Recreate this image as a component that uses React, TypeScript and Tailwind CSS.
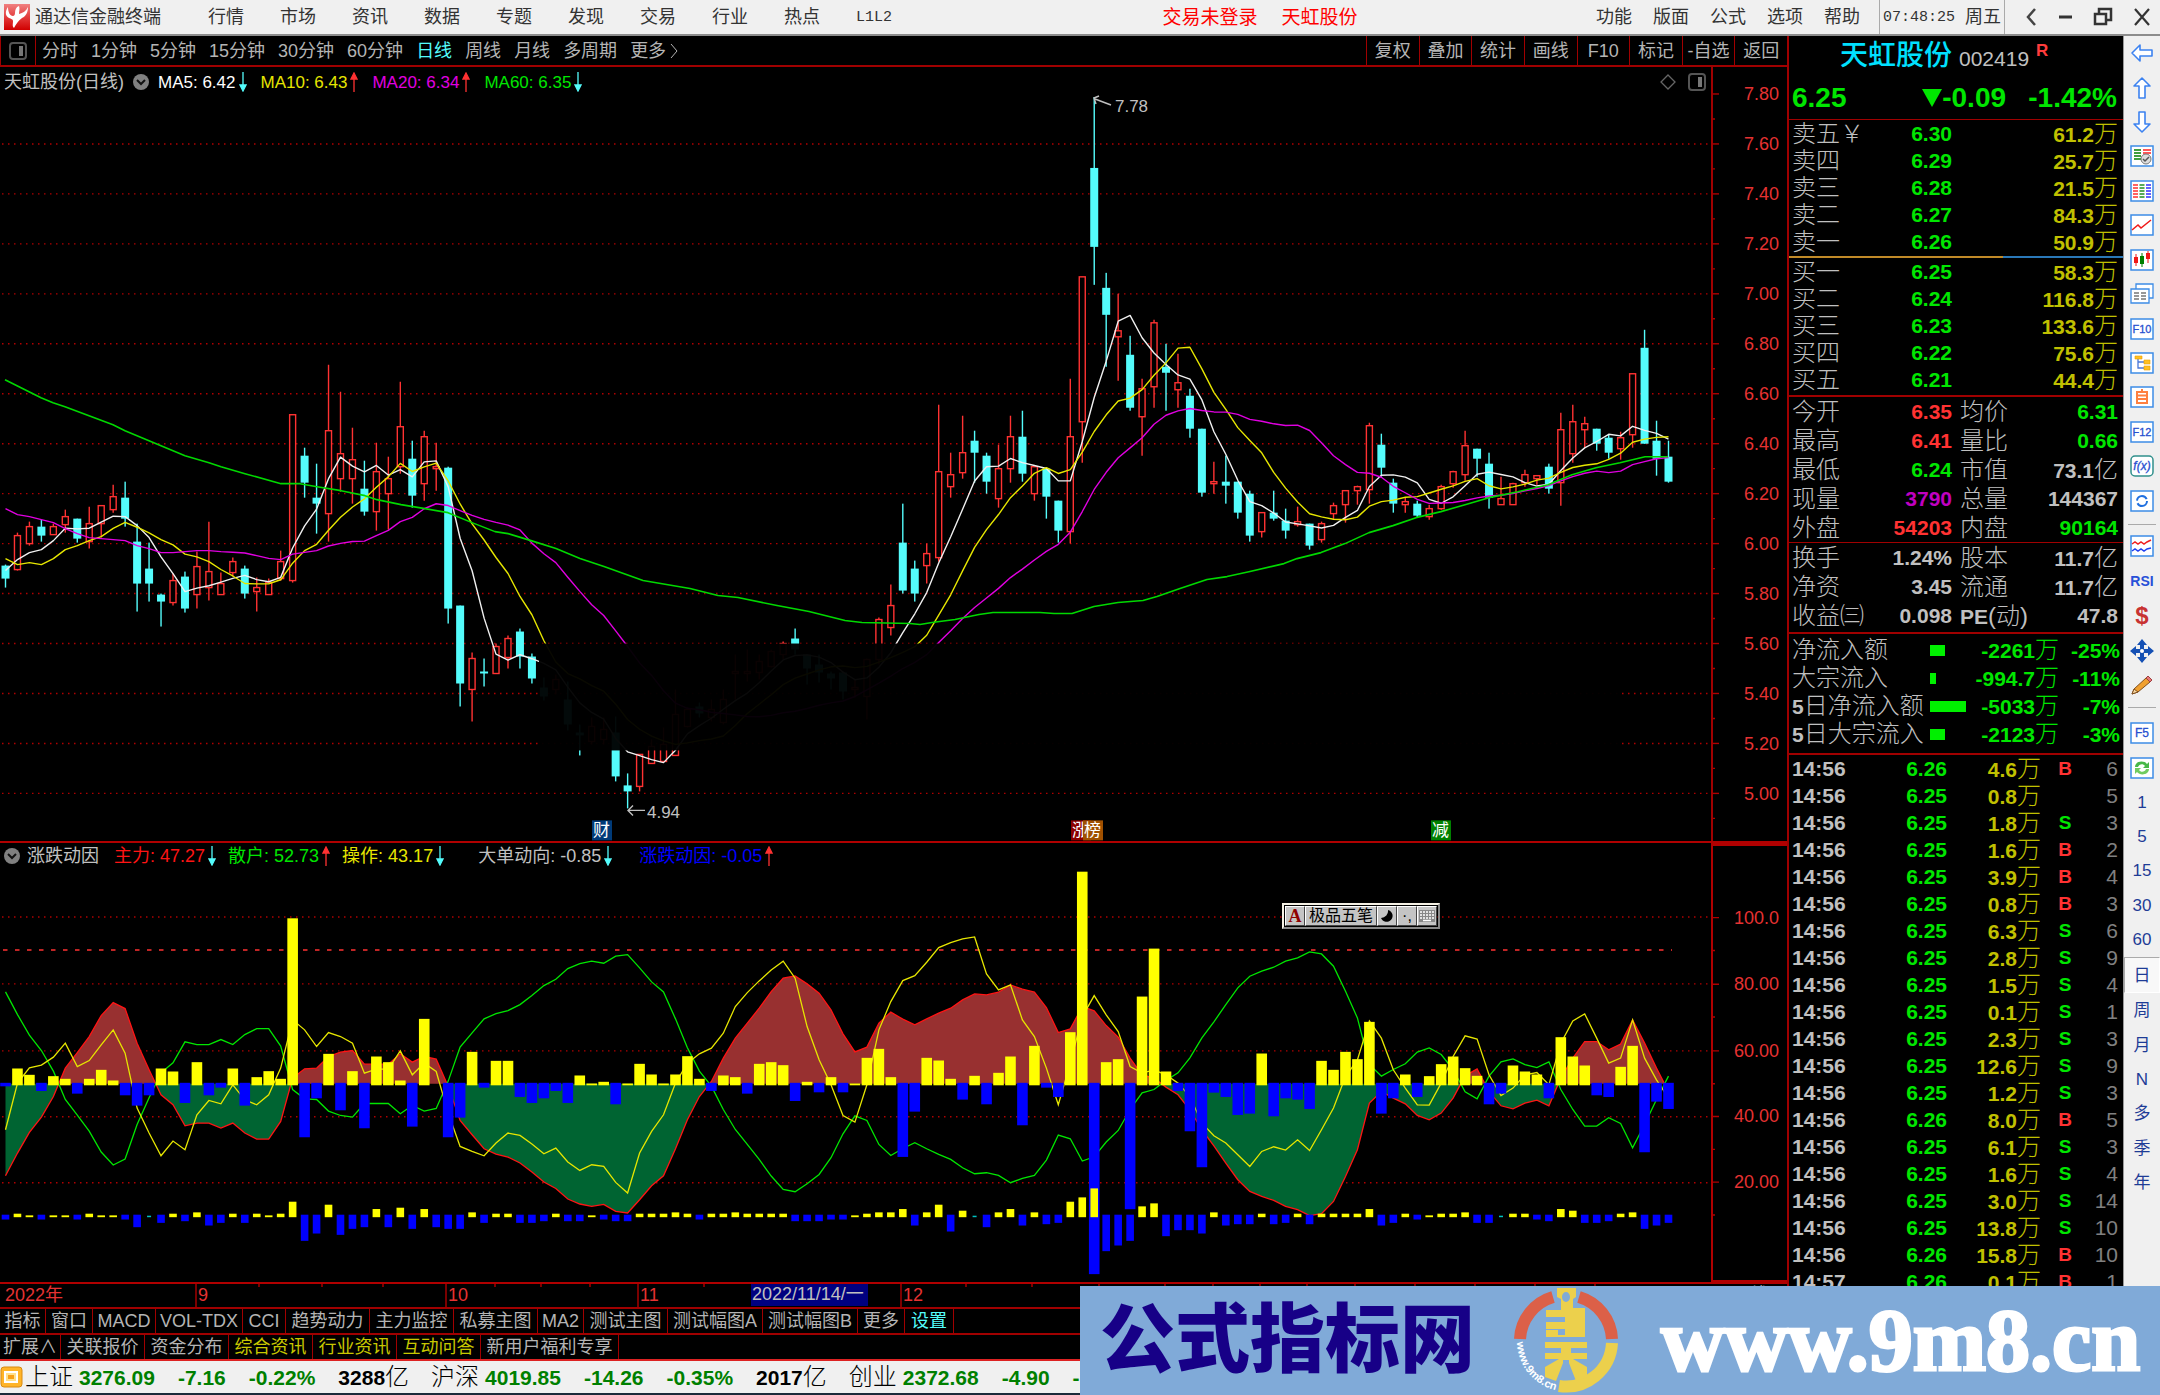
import React from "react";

// ---------- data ----------
const STEP = 11.964;
const X0 = 5.5;
const px = (i: number) => X0 + i * STEP;

// u/d (rise or fall), high, body top, body bottom, low
const candleData = `d565,566,579,588 u533,536,570,571 u522,527,544,546 d520,527,536,542 u524,527,535,535
u510,517,525,533 d519,519,539,543 u507,524,542,549 u506,506,524,538 u485,497,510,513
d482,498,519,527 d524,542,584,612 d543,569,584,602 d594,595,602,627 u574,581,603,606
d572,577,609,613 u552,567,595,609 u522,572,588,601 u573,584,595,595 u558,562,573,577
d566,569,594,599 u578,588,592,612 u579,583,595,595 u551,562,579,581 u415,415,581,583
d448,456,483,498 d464,498,504,534 u365,431,514,542 u392,454,479,492 u428,460,479,504
d461,489,512,516 u443,472,512,531 u457,479,494,530 u382,427,467,474 d441,459,496,508
u431,437,484,501 u443,467,469,491 d467,468,609,624 d606,606,684,707 u653,659,690,722
d659,672,674,687 u644,647,674,674 u636,639,658,669 d629,632,657,669 d654,657,679,684
d678,688,697,701 u675,680,690,695 d682,700,725,731 d725,733,736,756 u718,727,742,745
u718,730,740,745 d717,733,777,782 d774,786,792,809 u755,755,787,792 u740,747,764,764
u728,745,762,762 u690,715,756,756 u708,710,727,728 d703,707,714,718 u700,710,718,722
u690,700,723,725 u655,672,674,700 u650,672,674,682 u655,662,673,680 u650,652,667,668
u642,644,655,660 d629,639,650,655 d655,655,669,685 d655,665,673,683 d672,674,679,690
d672,673,692,700 u680,688,690,698 u659,660,697,720 u618,620,660,665 u585,606,628,636
d504,543,591,594 d561,569,594,602 u544,554,566,584 u405,472,558,562 u453,475,487,498
u416,453,473,479 d431,441,453,483 d453,456,482,494 u445,469,499,508 u416,437,469,483
d411,437,474,482 u467,467,494,501 d468,469,497,519 d501,501,531,543 u379,437,532,544
u277,277,422,463 d97,168,247,285 d273,288,315,367 u294,331,337,381 d336,355,408,411
u379,389,417,456 u320,323,387,408 d344,367,373,411 u354,383,390,408 d389,396,429,438
d429,429,493,497 u462,482,484,494 d456,482,486,504 d482,482,513,519 d491,494,536,542
u513,513,532,538 d491,513,519,521 d509,521,531,539 u507,522,525,527 d524,524,546,550
u522,524,540,543 u503,506,514,520 u491,491,505,523 u486,487,491,505 u423,426,490,504
d434,445,468,477 d479,483,504,513 u498,502,505,513 d501,504,516,518 u505,509,517,520
u485,487,509,510 u471,472,484,488 u431,446,475,481 d449,449,459,477 d453,464,498,509
u477,499,505,505 u483,484,505,505 u470,475,483,487 u476,476,479,485 d464,467,489,494
u413,430,483,506 u405,422,454,463 u417,424,430,448 d429,429,444,451 d435,438,453,459
u432,438,449,460 u374,374,435,448 d330,348,444,444 d421,441,459,476 d441,457,482,483`;

const candles = candleData.split(/\s+/).map((s) => {
  const [high, top, bottom, low] = s.slice(1).split(",").map(Number);
  return { up: s[0] === "u", high, top, bottom, low };
});
const closes = candles.map((c) => (c.up ? c.top : c.bottom));

// lead holds the averages of the first days, whose history is not loaded
const average = (n: number, lead: number[]) =>
  closes.map((_, i) => {
    if (i < lead.length) return lead[i];
    return closes.slice(i - n + 1, i + 1).reduce((a, b) => a + b, 0) / n;
  });
const toPoints = (ys: number[]) =>
  ys.map((y, i) => `${px(i).toFixed(1)},${y.toFixed(1)}`).join(" ");

const ma5 = average(5, [571, 560, 553, 550]);
const ma10 = average(10, [559, 565, 563, 565, 559, 550, 546, 541, 537]);
const ma20 = average(20, [
  509, 515, 517, 520, 523, 529, 534, 538, 539, 540, 541, 546, 549, 553, 553,
  552, 551, 551, 552,
]);
const ma60 =
  "5,380 17,386 29,392 41,398 53,403 65,407 89,416 113,425 125,431 149,441 173,451 185,456 209,463 221,467 245,474 281,484 300,484 317,487 341,491 365,496 377,500 401,505 425,509 448,513 472,523 495,532 508,534 531,541 556,549 580,559 592,563 604,567 643,581 690,589 718,596 738,598 777,606 809,612 845,621 862,623 910,624 920,625 932,623 955,620 979,615 993,613 1040,613 1054,614 1072,614 1094,607 1118,603 1143,601 1157,597 1180,589 1207,580 1227,577 1250,572 1284,564 1297,559 1321,553 1345,544 1369,533 1393,526 1416,518 1441,512 1465,505 1489,498 1518,492 1548,485 1572,475 1596,468 1620,463 1645,457 1668,457";

const MID = 1084;
const UNIT = 3.333;
const iy = (v: number) => MID - (v - 50) * UNIT;

const mainForce = [
  22.4, 29.2, 35.4, 40, 46.2, 54.7, 59.4, 64.2, 70.5, 74.4, 72.6, 62.2, 54.2,
  46.7, 43.7, 37.4, 38.2, 38.2, 36.7, 38.2, 35.2, 33.4, 33.4, 38.7, 51.7, 54.5,
  54.7, 58.2, 59.5, 60, 55.9, 55.9, 55.9, 59, 56.5, 58.2, 57.4, 49.2, 39, 34.7,
  30.5, 28.9, 28, 26.2, 23.5, 20.5, 18.6, 15.4, 13.9, 13.2, 13.8, 11.7, 11.2,
  15.2, 19.4, 22.4, 30.5, 39.2, 46.2, 50.7, 57.7, 63.7, 68.2, 72.7, 77.7, 81.7,
  82.4, 80, 77.2, 72.2, 65, 59.6, 61, 68.2, 71.5, 69.4, 67.7, 69.5, 71.2, 72.7,
  75.2, 77, 76.7, 77.5, 79.7, 78.4, 77.5, 72.9, 65.4, 66.5, 73.2, 71.9, 67.5,
  64, 57.7, 52.7, 51.7, 49, 46.7, 42.2, 36.2, 31.4, 26.2, 21.2, 17.7, 16.2, 15,
  13.2, 12.2, 10.4, 11, 14.7, 22.2, 30.2, 44.2, 47.7, 45.7, 44, 40.5, 39.2,
  41.2, 45.7, 52.4, 54.5, 47.7, 43.4, 42.5, 44.2, 45.1, 43.4, 51.7, 57.7, 62.7,
  62.7, 60.2, 61.9, 69.2, 62.2, 54.7, 47.7,
];
const operate = [
  36.2, 50.2, 54.8, 55.6, 58, 62.2, 55.2, 57, 61.7, 66.2, 59.2, 42.7, 35.2,
  28.4, 32.8, 30.2, 40.7, 45, 44, 49.7, 45.2, 43.7, 46.7, 54.7, 69.2, 66.2,
  61.2, 65.4, 64.2, 62.2, 53.2, 54.4, 54.4, 59.9, 52.7, 56.2, 53.7, 41.2, 31.2,
  29.7, 28.4, 32.2, 35.2, 34.5, 31.9, 29, 30.7, 26.5, 24, 25.7, 25.2, 20.4,
  17.2, 29.2, 35.7, 40.7, 50.2, 56.2, 59, 60.7, 65.2, 73.2, 77.4, 80.9, 84.2,
  86.8, 81.7, 67.2, 57.2, 49.7, 40.5, 38.5, 49.7, 66.2, 74.7, 81, 82.5, 86.5,
  90.9, 92.4, 93.5, 94.1, 83, 78.2, 79.7, 69.2, 64.2, 54.7, 43.7, 56.2, 70.2,
  76.5, 70.7, 65.7, 55.2, 53.2, 54.2, 52.7, 50.2, 46.2, 38.2, 34.4, 32.2, 28.7,
  25.2, 29.7, 31.1, 30.1, 33.2, 30, 36.2, 42.7, 52.2, 57.2, 68.9, 63.7, 54.2,
  48.7, 43.7, 43.6, 50.2, 58.2, 64.4, 63.4, 52.7, 46.5, 48.7, 52.7, 53.4, 49.7,
  62.2, 68.9, 71, 63.7, 56.2, 57.7, 69.2, 57.7, 51.2, 45.7,
];
const bigBars = [
  -0.6, 4.6, 2.7, -2, 2.3, 1.5, -2.8, 1.5, 4.2, 1, -3.3, -6.4, -3.3, 4.6, 3.7,
  -5.6, 6.5, -3.3, -1, 4.6, -6.4, 2, 3.8, 1.5, 49.7, -15.9, -4.2, 9, -7.8, 3.8,
  -13.2, 8.2, 6.5, 1, -12.7, 19.5, 0, -15.9, -10, 9.6, -1, 6.9, 6.9, -3.8,
  -5.6, -4.2, -2, -5.6, 2.5, 0.1, 0.6, -6, 0.1, 6, 2.8, 0.1, 2.8, 8.3, 1.5, -2,
  2.5, 2, -2.8, 6, 6.5, 5.6, -5, 0.6, -2.4, 2, -2.4, 0.1, 7.8, 10.5, 2, -21.8,
  -8.2, 7.8, 7, 1.5, -4.6, 2.4, -6, 3.3, 8.2, -12.3, 11.4, -1, -3.8, 15.5,
  63.7, -57, 6.5, 7.4, -37.5, 26.2, 40.6, 3.7, -2, -14.1, -24.9, -2.5, -3.8,
  -9.2, -8.8, 9.1, -9.6, -4.2, -4.6, -7.4, 6.9, 4.2, 9.6, 7.4, 18.6, -8.8,
  -4.2, 2.8, -3.8, 2.3, 5.9, 8.2, 4.7, 2.4, -6, -2.8, 5.5, 3.7, 2.8, -4.2, 14,
  8.2, 5.5, -3.3, -3.8, 5.1, 11.4, -20.4, -5.2, -7.4,
];
const smallBars = [
  -1, 0.6, 0.1, -1, 0.1, 0.1, -1, 0.6, 0.1, 0.1, -1, -3.3, 0, -2, 0.6, -1.5, 1,
  -2.8, -2, 0.6, -2, 0.6, 0.1, 0.6, 4.2, -7.4, -5.2, 3.3, -5.6, -3.8, -3.3, 2,
  -3.3, 2.4, -3.8, 2, -3.3, -3.8, -3.8, 1, -2, 0.6, 0.6, -2, -2, -1.5, 0.6,
  -1.5, -1.5, 0.1, -1, -1.5, -1.5, 0.6, 0.6, 0.6, 1, 0.6, -1, 0.6, 0.6, 1, 0.6,
  0.6, 0.6, 0.6, -1.5, -1.5, -1.5, -1, -1, 0.1, 0.6, 1, 1, 2, -2.8, 1, 3.3,
  -4.6, 1.5, 0, -3.3, 1, 2, -2.8, 1, -2.4, -2, 4.2, 5.5, 8.2, -10.5, -8.8,
  -7.4, 2.8, 3.7, -6, -4.2, -4.2, -5.2, 1, -2.8, -2.4, -2.4, 0.6, -2.4, -2, 0.6,
  -2.4, 0.6, 0.6, 0.6, 0.6, 2, -2.8, -2, 0.6, -1, 0.1, 0.6, 0.6, 1, -2, -2, 0,
  0.6, 0.6, -1, -1.5, 2, 1.5, -2, -2, -1.5, 0.6, 1, -3.8, -2.8, -2,
];

const sells = [
  ["卖五", "6.30", "61.2万"],
  ["卖四", "6.29", "25.7万"],
  ["卖三", "6.28", "21.5万"],
  ["卖二", "6.27", "84.3万"],
  ["卖一", "6.26", "50.9万"],
];
const buys = [
  ["买一", "6.25", "58.3万"],
  ["买二", "6.24", "116.8万"],
  ["买三", "6.23", "133.6万"],
  ["买四", "6.22", "75.6万"],
  ["买五", "6.21", "44.4万"],
];
const G = "text-[#00e600]";
const R = "text-[#ff3232]";
const W = "text-[#c0c0c0]";
const stats = [
  ["今开", "6.35", R, "均价", "6.31", G],
  ["最高", "6.41", R, "量比", "0.66", G],
  ["最低", "6.24", G, "市值", "73.1亿", W],
  ["现量", "3790", "text-[#c000c0]", "总量", "144367", W],
  ["外盘", "54203", R, "内盘", "90164", G],
];
const ratios = [
  ["换手", "1.24%", W, "股本", "11.7亿", W],
  ["净资", "3.45", W, "流通", "11.7亿", W],
  ["收益㈢", "0.098", W, "PE(动)", "47.8", W],
];
const flows = [
  ["净流入额", "w-[15px]", "-2261万", "-25%"],
  ["大宗流入", "w-[6px]", "-994.7万", "-11%"],
  ["5日净流入额", "w-[36px]", "-5033万", "-7%"],
  ["5日大宗流入", "w-[15px]", "-2123万", "-3%"],
];
const ticks = [
  ["14:56", "6.26", "4.6万", "B", "6"],
  ["14:56", "6.25", "0.8万", "", "5"],
  ["14:56", "6.25", "1.8万", "S", "3"],
  ["14:56", "6.25", "1.6万", "B", "2"],
  ["14:56", "6.25", "3.9万", "B", "4"],
  ["14:56", "6.25", "0.8万", "B", "3"],
  ["14:56", "6.25", "6.3万", "S", "6"],
  ["14:56", "6.25", "2.8万", "S", "9"],
  ["14:56", "6.25", "1.5万", "S", "4"],
  ["14:56", "6.25", "0.1万", "S", "1"],
  ["14:56", "6.25", "2.3万", "S", "3"],
  ["14:56", "6.25", "12.6万", "S", "9"],
  ["14:56", "6.25", "1.2万", "S", "3"],
  ["14:56", "6.26", "8.0万", "B", "5"],
  ["14:56", "6.25", "6.1万", "S", "3"],
  ["14:56", "6.25", "1.6万", "S", "4"],
  ["14:56", "6.25", "3.0万", "S", "14"],
  ["14:56", "6.25", "13.8万", "S", "10"],
  ["14:56", "6.26", "15.8万", "B", "10"],
  ["14:57", "6.26", "0.1万", "B", "1"],
];

// ---------- header ----------
const TitleBar = () => (
  <header className="flex h-9 shrink-0 items-center border-b-2 border-[#8c8c8c] bg-[#f0f0f0] text-[18px] leading-none text-[#333]">
    <svg className="ml-1 h-[26px] w-[26px]" viewBox="0 0 26 26">
      <defs>
        <linearGradient id="logo" x1="0" y1="0" x2="0" y2="1">
          <stop offset="0" stopColor="#f08080" />
          <stop offset="0.6" stopColor="#e03030" />
          <stop offset="1" stopColor="#d00000" />
        </linearGradient>
      </defs>
      <rect width="26" height="26" fill="url(#logo)" />
      <path d="M4 3c-3 4-3 9 1 11 2 1 4 1 4 3 0 3-1 5 1 7 2-4 4-7 8-10 4-2 6-6 6-11-2 4-5 6-9 7 0-3 1-5 0-8-3 1-4 4-4 7 0 2-1 3-2 3-3 0-5-4-5-9z" fill="#fff" />
    </svg>
    <h1 className="ml-[5px] w-[173px]">通达信金融终端</h1>
    <nav className="flex gap-9">
      {["行情", "市场", "资讯", "数据", "专题", "发现", "交易", "行业", "热点"].map((m) => (
        <button key={m}>{m}</button>
      ))}
      <button className="font-['Liberation_Mono',monospace] text-[15px]">L1L2</button>
    </nav>
    <div className="flex flex-1 justify-center gap-6 pl-8 text-[19px] text-[#ff0000]">
      <button>交易未登录</button>
      <button>天虹股份</button>
    </div>
    <nav className="flex gap-[21px]">
      {["功能", "版面", "公式", "选项", "帮助"].map((m) => (
        <button key={m}>{m}</button>
      ))}
    </nav>
    <div className="ml-[19px] flex h-full w-[126px] items-center gap-2.5 border-x border-[#aaa] pl-[3px]">
      <span className="font-['Liberation_Mono',monospace] text-[15px]">07:48:25</span>
      <span>周五</span>
    </div>
    <div className="flex w-[155px] items-center justify-between pr-2 pl-[18px]">
      <button aria-label="后退">
        <svg className="h-5 w-4" viewBox="0 0 16 20"><path d="M12 2 5 10l7 8" fill="none" stroke="#444" strokeWidth="2.5" /></svg>
      </button>
      <button aria-label="最小化">
        <svg className="h-5 w-4" viewBox="0 0 16 20"><path d="M1 10h13" stroke="#333" strokeWidth="3" /></svg>
      </button>
      <button aria-label="还原">
        <svg className="h-5 w-5" viewBox="0 0 20 20" fill="none" stroke="#333" strokeWidth="2.5"><path d="M2 7h11v10H2zM6 6V2h12v11h-4" /></svg>
      </button>
      <button aria-label="关闭">
        <svg className="h-5 w-5" viewBox="0 0 20 20"><path d="m3 2 14 16M17 2 3 18" stroke="#333" strokeWidth="2.2" /></svg>
      </button>
    </div>
  </header>
);

const PanelIcon = () => (
  <svg className="h-[18px] w-[18px]" viewBox="0 0 18 18">
    <rect x="1" y="1" width="16" height="16" rx="3" fill="none" stroke="#555" strokeWidth="2" />
    <rect x="10" y="4" width="4" height="10" fill="#777" />
  </svg>
);

const PeriodBar = () => (
  <div className="flex h-[31px] shrink-0 items-stretch border-b-2 border-[#a00000] text-[18px] leading-none text-[#b4b4b4]">
    <button aria-label="面板" className="flex w-9 items-center justify-center border-x border-[#a00000]">
      <PanelIcon />
    </button>
    <div className="flex flex-1 items-center gap-[13px] pl-1.5">
      {["分时", "1分钟", "5分钟", "15分钟", "30分钟", "60分钟", "日线", "周线", "月线", "多周期"].map((p) => (
        <button key={p} className={p === "日线" ? "text-[#54fcfc]" : ""}>{p}</button>
      ))}
      <button className="flex items-center gap-1">
        更多
        <svg className="h-4 w-2" viewBox="0 0 8 16"><path d="m1 1 6 7-6 7" fill="none" stroke="#b4b4b4" /></svg>
      </button>
    </div>
    <div className="flex w-[421px]">
      {["复权", "叠加", "统计", "画线", "F10", "标记", "-自选", "返回"].map((b) => (
        <button key={b} className="flex-1 border-l border-[#a00000]">{b}</button>
      ))}
    </div>
  </div>
);

// ---------- charts ----------
const Toggle = () => (
  <button aria-label="展开" className="flex h-4 w-4 items-center justify-center rounded-full bg-[#808080]">
    <svg className="h-2 w-2.5" viewBox="0 0 10 8"><path d="m1 2 4 4 4-4" fill="none" stroke="#111" strokeWidth="2" /></svg>
  </button>
);

const Arrow = ({ up }: { up?: boolean }) => (
  <svg className="ml-[3px] h-5 w-2" viewBox="0 0 8 20">
    {up ? (
      <path d="M4 20V6M4 1l3 6H1z" stroke="#ff3232" strokeWidth="1.3" fill="#ff3232" />
    ) : (
      <path d="M4 0v14M4 19l3-6H1z" stroke="#54fcfc" strokeWidth="1.3" fill="#54fcfc" />
    )}
  </svg>
);

const Legend = ({ text, up, className }: { text: string; up?: boolean; className: string }) => (
  <span className={`flex items-center ${className}`}>
    {text}
    <Arrow up={up} />
  </span>
);

const priceGrid = Array.from({ length: 14 }, (_, k) => 143.7 + k * 50.05);

const Badge = ({ x, y, fill, text }: { x: number; y: number; fill: string; text: string }) => (
  <g>
    <rect x={x} y={y} width="20" height="20" fill={fill} />
    <text x={x + 1} y={y + 16} fontSize="17" fill="#fff">{text}</text>
  </g>
);

const PriceChart = () => (
  <section className="flex min-h-0 flex-[775_1_0%] border-b-2 border-[#b00000]">
    <div className="flex min-w-0 flex-1 flex-col">
      <div className="flex h-[26px] shrink-0 items-center pt-1 pl-1 text-[17px] leading-none text-[#c0c0c0]">
        <span className="text-[18px]">天虹股份(日线)</span>
        <span className="mx-[9px] flex"><Toggle /></span>
        <div className="flex flex-1 gap-[14px]">
          <Legend text="MA5: 6.42" className="text-white" />
          <Legend text="MA10: 6.43" up className="text-[#e6e600]" />
          <Legend text="MA20: 6.34" up className="text-[#e000e0]" />
          <Legend text="MA60: 6.35" className="text-[#00e600]" />
        </div>
        <svg className="mr-3 h-4 w-4" viewBox="0 0 16 16"><path d="m8 1 7 7-7 7-7-7z" fill="none" stroke="#666" strokeWidth="1.3" /></svg>
        <span className="mr-[5px]"><PanelIcon /></span>
      </div>
      <svg className="min-h-0 w-full flex-1" viewBox="0 93 1711 749" preserveAspectRatio="none">
        {priceGrid.map((y) => (
          <line key={y} x1="2" x2="1711" y1={Math.round(y)} y2={Math.round(y)} stroke="#b00000" strokeWidth="1.4" strokeDasharray="1.5 4.5" />
        ))}
        {candles.map((c, i) => {
          const x = px(i);
          return c.up ? (
            <g key={i} stroke="#ff3232" strokeWidth="1.4">
              <line x1={x} x2={x} y1={c.high} y2={c.low} />
              <rect x={x - 3} y={c.top} width="6" height={Math.max(1, c.bottom - c.top)} fill="#000" />
            </g>
          ) : (
            <g key={i} fill="#54fcfc">
              <rect x={x - 0.7} y={c.high} width="1.4" height={c.low - c.high} />
              <rect x={x - 4} y={c.top} width="8" height={Math.max(1.4, c.bottom - c.top)} />
            </g>
          );
        })}
        <g fill="none" strokeWidth="1.4" strokeLinejoin="round">
          <polyline points={toPoints(ma5)} stroke="#f0f0f0" />
          <polyline points={toPoints(ma10)} stroke="#e6e600" />
          <polyline points={toPoints(ma20)} stroke="#e000e0" />
          <polyline points={ma60} stroke="#00d800" strokeWidth="1.6" />
        </g>
        <rect x="539" y="644" width="1082" height="107" fill="#000" opacity="0.96" />
        <g fill="none" stroke="#c0c0c0" strokeWidth="1.4">
          <path d="M628 811h17M633 806l-5 5 5 5" />
          <path d="M1095 99l16 6M1099 96l-5 2 2 6" />
        </g>
        <g fill="#c0c0c0" fontSize="17">
          <text x="647" y="819">4.94</text>
          <text x="1115" y="112">7.78</text>
        </g>
        <Badge x={592} y={821} fill="#003a78" text="财" />
        <Badge x={1071} y={821} fill="#8c0000" text="涨" />
        <Badge x={1083} y={821} fill="#a05000" text="榜" />
        <Badge x={1431} y={821} fill="#008000" text="减" />
      </svg>
    </div>
    <svg className="h-full w-[76px] border-l-2 border-[#a00000]" viewBox="0 67 74 775" preserveAspectRatio="none">
      {Array.from({ length: 15 }, (_, k) => {
        const y = 93.7 + k * 50.05;
        return (
          <g key={k}>
            <path d={`M0 ${Math.round(y)}h6`} stroke="#b00000" strokeWidth="1.4" />
            <path d={`M0 ${Math.round(y + 25)}h2`} stroke="#b00000" strokeWidth="1.4" />
            <text x="66" y={y + 6} fontSize="18" textAnchor="end" fill="#e63232">{(7.8 - k * 0.2).toFixed(2)}</text>
          </g>
        );
      })}
    </svg>
  </section>
);

const clampArea = (rise: boolean) => {
  // split at the middle line so that each side gets its own colour
  const pts: string[] = [`${px(0)},${MID}`];
  mainForce.forEach((v, i) => {
    const prev = mainForce[i - 1];
    if (i > 0 && (prev - 50) * (v - 50) < 0) {
      const t = (50 - prev) / (v - prev);
      pts.push(`${px(i - 1 + t)},${MID}`);
    }
    const side = rise ? Math.max(v, 50) : Math.min(v, 50);
    pts.push(`${px(i)},${iy(side)}`);
  });
  pts.push(`${px(mainForce.length - 1)},${MID}`);
  return pts.join(" ");
};

const Bars = ({ values, base, width }: { values: number[]; base: number; width: number }) => (
  <g>
    {values.map((v, i) => {
      if (v === 0) {
        return width < 10 && <rect key={i} x={px(i) - 2} y={base} width="4" height="1.5" fill="#00c0c0" />;
      }
      const h = Math.abs(v) * UNIT;
      return (
        <rect
          key={i}
          x={px(i) - width / 2}
          y={v > 0 ? base - h : base - 1}
          width={width}
          height={h + 1.5}
          fill={v > 0 ? "#ffff00" : "#0000ff"}
        />
      );
    })}
  </g>
);

const IndicatorChart = () => (
  <section className="flex min-h-0 flex-[439_1_0%] border-b-2 border-[#b00000]">
    <div className="flex min-w-0 flex-1 flex-col">
      <div className="flex h-[26px] shrink-0 items-center pl-1 text-[18px] leading-none">
        <Toggle />
        <span className="mr-[15px] ml-[7px] text-[#c0c0c0]">涨跌动因</span>
        <div className="flex gap-3">
          <Legend text="主力: 47.27" className="text-[#ff1414]" />
          <Legend text="散户: 52.73" up className="text-[#00e600]" />
          <Legend text="操作: 43.17" className="text-[#e6e600]" />
          <Legend text="大单动向: -0.85" className="ml-[22px] text-[#c0c0c0]" />
          <Legend text="涨跌动因: -0.05" up className="ml-[15px] text-[#0000ff]" />
        </div>
      </div>
      <svg className="min-h-0 w-full flex-1" viewBox="0 869 1711 413" preserveAspectRatio="none">
        {[917, 984, 1051, 1117, 1183].map((y) => (
          <line key={y} x1="2" x2="1711" y1={y} y2={y} stroke="#b00000" strokeWidth="1.4" strokeDasharray="1.5 4.5" />
        ))}
        <polygon points={clampArea(true)} fill="#983030" />
        <polygon points={clampArea(false)} fill="#006432" />
        <line x1="3" x2="1672" y1="950" y2="950" stroke="#ff3232" strokeWidth="1.5" strokeDasharray="4.5 7.5" />
        <g fill="none" strokeWidth="1.3">
          <polyline points={toPoints(mainForce.map(iy))} stroke="#ff1414" />
          <polyline points={toPoints(mainForce.map((v) => iy(100 - v)))} stroke="#00e600" />
          <polyline points={toPoints(operate.map(iy))} stroke="#e6e600" />
        </g>
        <Bars values={bigBars} base={MID} width={10.6} />
        <Bars values={smallBars} base={1216} width={7.6} />
      </svg>
    </div>
    <svg className="h-full w-[76px] border-2 border-t-[3px] border-r-0 border-[#b00000]" viewBox="0 845 74 436" preserveAspectRatio="none">
      {[["100.0", 917], ["80.00", 984], ["60.00", 1051], ["40.00", 1117], ["20.00", 1183]].map(([t, y]) => (
        <g key={t}>
          <path d={`M0 ${y}h6M0 ${Number(y) + 33}h2`} stroke="#b00000" strokeWidth="1.4" />
          <text x="66" y={Number(y) + 6} fontSize="18" textAnchor="end" fill="#e63232">{t}</text>
        </g>
      ))}
    </svg>
  </section>
);

const months: [string, number][] = [["9", 196], ["10", 446], ["11", 638], ["12", 901]];
const weeks = [259, 322, 383, 495, 541, 590, 704, 966, 1032, 1099, 1165, 1213, 1260, 1307, 1355, 1415, 1475, 1535, 1595];

const TimeAxis = () => (
  <svg className="h-[23px] w-full shrink-0" viewBox="0 0 1787 23" preserveAspectRatio="none">
    <text x="5" y="17" fontSize="18" fill="#e63232">2022年</text>
    {months.map(([t, x]) => (
      <g key={t}>
        <path d={`M${x} 0v23`} stroke="#b00000" strokeWidth="1.4" />
        <text x={x + 2} y="17" fontSize="18" fill="#e63232">{t}</text>
      </g>
    ))}
    {weeks.map((x) => (
      <path key={x} d={`M${x} 0v3`} stroke="#b00000" strokeWidth="1.4" />
    ))}
    <rect x="751" y="0" width="117" height="22" fill="#000080" />
    <text x="752" y="16" fontSize="18" fill="#c0c0c0">2022/11/14/一</text>
    <text x="1732" y="17" fontSize="18" fill="#c0c0c0">日线</text>
  </svg>
);

const tabs: [string, string][] = [
  ["指标", "w-[46px]"], ["窗口", "w-[47px]"], ["MACD", "w-[63px]"], ["VOL-TDX", "w-[87px]"],
  ["CCI", "w-[43px]"], ["趋势动力", "w-[84px]"], ["主力监控", "w-[84px]"], ["私募主图", "w-[84px]"],
  ["MA2", "w-[46px]"], ["测试主图", "w-[84px]"], ["测试幅图A", "w-[95px]"], ["测试幅图B", "w-[95px]"],
  ["更多", "w-[47px]"], ["设置", "w-[49px] text-[#54fcfc]"],
];
const links: [string, string][] = [
  ["扩展∧", "w-[61px]"], ["关联报价", "w-[84px]"], ["资金分布", "w-[84px]"],
  ["综合资讯", "w-[84px] text-[#c8c800]"], ["行业资讯", "w-[84px] text-[#c8c800]"],
  ["互动问答", "w-[84px] text-[#c8c800]"], ["新用户福利专享", "w-[138px]"],
];

const TabRow = ({ items }: { items: [string, string][] }) => (
  <nav className="flex h-[26px] shrink-0 border-t-2 border-[#a00000] text-[18px] leading-none text-[#b4b4b4]">
    {items.map(([t, c]) => (
      <button key={t} className={`flex shrink-0 items-center justify-center border-r border-[#a00000] whitespace-nowrap ${c}`}>{t}</button>
    ))}
  </nav>
);

// ---------- quote panel ----------
// units are set thinner and larger than the digits
const Num = ({ v }: { v: string }) => {
  const unit = /[万亿]$/.test(v) ? v.slice(-1) : "";
  return (
    <>
      {unit ? v.slice(0, -1) : v}
      {unit && <span className="text-[24px] font-light">{unit}</span>}
    </>
  );
};

const label = "p-0 text-left text-[24px] font-light whitespace-nowrap text-[#c0c0c0]";
const num = "p-0 text-right whitespace-nowrap";

const Book = ({ rows, yen }: { rows: string[][]; yen?: boolean }) => (
  <table className="w-full table-fixed leading-none">
    <tbody>
      {rows.map(([name, price, vol], i) => (
        <tr key={name} className="h-[27px]">
          <th className={`w-[80px] ${label}`}>{name}{yen && i === 0 && "￥"}</th>
          <td className={`w-[80px] ${num} text-[#00e600]`}>{price}</td>
          <td className={`${num} text-[#c0c000]`}><Num v={vol} /></td>
        </tr>
      ))}
    </tbody>
  </table>
);

const Stats = ({ rows }: { rows: string[][] }) => (
  <table className="w-full table-fixed leading-none">
    <tbody>
      {rows.map(([a, av, ac, b, bv, bc]) => (
        <tr key={a} className="h-[29px]">
          <th className={`w-[80px] ${label}`}>{a}</th>
          <td className={`w-[80px] ${num} ${ac}`}>{av}</td>
          <th className={`w-[80px] ${label}`}>
            <span className="pl-2">
              {b.startsWith("PE") ? <><b className="text-[21px] font-bold">PE</b>{b.slice(2)}</> : b}
            </span>
          </th>
          <td className={`${num} ${bc}`}><Num v={bv} /></td>
        </tr>
      ))}
    </tbody>
  </table>
);

const QuotePanel = () => (
  <aside className="flex w-[337px] shrink-0 flex-col overflow-hidden border-r border-l-2 border-r-[#999] border-l-[#a00000] bg-black text-[21px] leading-none font-bold">
    <div className="flex h-[84px] shrink-0 flex-col justify-between border-b border-[#a00000] pt-1.5 pr-[6px] pb-[7px] pl-[3px]">
      <div className="flex items-center gap-[7px] pl-[48px]">
        <h2 className="text-[28px] font-medium text-[#00e0ff]">天虹股份</h2>
        <span className="pt-1 font-normal text-[#c0c0c0]">002419</span>
        <span className="-mt-3 text-[17px] text-[#ff3c3c]">R</span>
      </div>
      <div className="flex justify-between text-[28px] text-[#00e600]">
        <span className="w-[108px]">6.25</span>
        <span className="flex items-center">
          <svg className="h-[18px] w-5" viewBox="0 0 20 18"><path d="M0 0h20L10 18z" fill="#00e600" /></svg>
          -0.09
        </span>
        <span>-1.42%</span>
      </div>
    </div>
    <div className="h-[136px] shrink-0 pr-[5px] pl-[3px]"><Book rows={sells} yen /></div>
    <div className="flex h-0.5 shrink-0"><i className="w-[214px] bg-[#c08a28]" /><i className="flex-1 bg-[#2a78b8]" /></div>
    <div className="shrink-0 border-b-2 border-[#a00000] pr-[5px] pb-0.5 pl-[3px]"><Book rows={buys} /></div>
    <div className="shrink-0 border-b border-[#a00000] pr-[5px] pl-[3px]"><Stats rows={stats} /></div>
    <div className="shrink-0 border-b-2 border-[#a00000] pr-[5px] pb-0.5 pl-[3px]"><Stats rows={ratios} /></div>
    <div className="shrink-0 border-b-2 border-[#a00000] pt-0.5 pr-[3px] pb-[5px] pl-[3px]">
      <table className="w-full table-fixed">
        <tbody>
          {flows.map(([name, w, v, p]) => (
            <tr key={name} className="h-[28px] text-[#00e600]">
              <th className={`w-[138px] ${label}`}>
                {name[0] === "5" ? <><b className="text-[21px] font-bold">5</b>{name.slice(1)}</> : name}
              </th>
              <td className="w-[36px] p-0"><div className={`h-[11px] bg-[#00f000] ${w}`} /></td>
              <td className={`w-[93px] ${num}`}><Num v={v} /></td>
              <td className={num}>{p}</td>
            </tr>
          ))}
        </tbody>
      </table>
    </div>
    <div className="min-h-0 flex-1 overflow-hidden pr-[5px] pl-[3px]">
      <table className="w-full table-fixed">
        <tbody>
          {ticks.map(([t, price, vol, side, n], i) => (
            <tr key={i} className="h-[27px]">
              <td className="w-[75px] p-0 text-[#c0c0c0]">{t}</td>
              <td className={`w-[80px] ${num} text-[#00e600]`}>{price}</td>
              <td className={`w-[94px] ${num} text-[#c0c000]`}><Num v={vol} /></td>
              <td className={`w-[48px] p-0 text-center text-[19px] ${side === "B" ? "text-[#ff3232]" : "text-[#00e600]"}`}>{side}</td>
              <td className={`${num} font-normal text-[#808080]`}>{n}</td>
            </tr>
          ))}
        </tbody>
      </table>
    </div>
  </aside>
);

// ---------- side tools ----------
const Box = ({ children, rx = 0, stroke = "#3c8ce6" }: { children?: React.ReactNode; rx?: number; stroke?: string }) => (
  <svg className="h-[22px] w-6" viewBox="0 0 24 22">
    <rect x="1" y="1" width="22" height="20" rx={rx} fill="#fff" stroke={stroke} strokeWidth="1.5" />
    {children}
  </svg>
);
const boxText = { fontSize: 11, fill: "#2850d0", textAnchor: "middle" as const, stroke: "#2850d0", strokeWidth: 0.3 };

const BigArrow = ({ d }: { d: string }) => (
  <svg className="h-6 w-6" viewBox="0 0 24 24"><path d={d} fill="#fff" stroke="#3c82f0" strokeWidth="1.6" strokeLinejoin="round" /></svg>
);

const tools: [string, React.ReactNode][] = [
  ["返回", <BigArrow d="M2 12 10 4v5h12v6H10v5z" />],
  ["上一个", <BigArrow d="m12 2 8 8h-5v12H9V10H4z" />],
  ["下一个", <BigArrow d="m12 22 8-8h-5V2H9v12H4z" />],
  ["报价", <Box><path d="M4 5h7M4 8h7M4 11h7M4 14h7" stroke="#008000" strokeWidth="1.5" /><path d="M13 5h8M13 8h8" stroke="#ff2020" strokeWidth="1.5" /><circle cx="16" cy="14" r="5" fill="#ddd" stroke="#777" /><path d="m13 14 2 2 4-4" fill="none" stroke="#555" strokeWidth="1.5" /></Box>],
  ["列表", <Box><path d="M3 5h5M3 8h5M3 11h5M3 14h5M3 17h5" stroke="#ff3030" strokeWidth="1.5" /><path d="M9.5 5h5M9.5 8h5M9.5 11h5M9.5 14h5M9.5 17h5" stroke="#209020" strokeWidth="1.5" /><path d="M16 5h5M16 8h5M16 11h5M16 14h5M16 17h5" stroke="#3030ff" strokeWidth="1.5" /></Box>],
  ["走势", <Box><path d="m2 16 6-5 3 3 10-8" fill="none" stroke="#f01818" strokeWidth="1.5" /></Box>],
  ["K线", <Box><path d="M6 5v12M18 2v12" stroke="#f01818" /><path d="M12 4v14" stroke="#008000" /><path d="M4 8h4v6H4zM16 4h4v6h-4z" fill="#f01818" /><path d="M10 7h4v8h-4z" fill="#008000" /></Box>],
  ["窗口", <svg className="h-[22px] w-6" viewBox="0 0 24 22"><path d="M6 1h17v14H6z" fill="#fff" stroke="#3c8ce6" strokeWidth="1.3" /><path d="M1 6h18v14H1z" fill="#fff" stroke="#3c8ce6" strokeWidth="1.3" /><path d="M4 10h5M11 10h5M4 13h5M11 13h5M4 16h5M11 16h5" stroke="#777" strokeWidth="1.5" /></svg>],
  ["F10", <Box><text x="12" y="15" {...boxText}>F10</text></Box>],
  ["树", <Box><path d="M8 6v10h6M8 10h6" fill="none" stroke="#4a78d8" strokeWidth="1.3" /><path d="M5 4h7v3H5zM14 8h6v4h-6zM14 14h6v4h-6z" fill="#ffc020" stroke="#e8a000" strokeWidth=".6" /></Box>],
  ["自选", <Box><path d="M7 6h10v11H7zM12 6V3M7 9.5h10M7 13h10" fill="none" stroke="#ff8040" strokeWidth="2" /></Box>],
  ["F12", <Box><text x="12" y="15" {...boxText}>F12</text></Box>],
  ["公式", <Box rx={4} stroke="#30908c"><text x="12" y="15" {...boxText} fontSize={12} fontStyle="italic">f(x)</text></Box>],
  ["刷新", <Box><circle cx="12" cy="11" r="5" fill="none" stroke="#2070e0" strokeWidth="2" strokeDasharray="13 2.7" /></Box>],
];
const tools2: [string, React.ReactNode][] = [
  ["叠加", <Box><path d="m2 9 3-2 3 2 3-2 3 2 3-2 4-2" fill="none" stroke="#f02020" strokeWidth="1.5" /><path d="m2 16 3-2 3 2 3-2 3 2 3-2 4-1" fill="none" stroke="#2040f0" strokeWidth="1.5" /></Box>],
  ["RSI", <span className="text-[14px] font-bold text-[#2850d8]">RSI</span>],
  ["资金", <span className="text-[24px] font-bold text-[#c83232]">$</span>],
  ["移动", <svg className="h-6 w-6" viewBox="0 0 24 24" fill="#1450b4"><path d="m12 0 5 6h-3v4h4V7l6 5-6 5v-3h-4v4h3l-5 6-5-6h3v-4H6v3l-6-5 6-5v3h4V6H7z" /><circle cx="12" cy="12" r="2" fill="#fff" /></svg>],
  ["画笔", <svg className="h-6 w-6" viewBox="0 0 24 24"><path d="m2 20 2-5L16 4l4 4L8 18z" fill="#f0a030" stroke="#805020" /><path d="m16 4 2-2 4 4-2 2z" fill="#e87878" stroke="#a04040" /><path d="m2 20 2-5 4 3z" fill="#f8d8a0" stroke="#805020" /></svg>],
];
const periods = ["1", "5", "15", "30", "60", "日", "周", "月", "N", "多", "季", "年"];

const toolButton = "flex min-h-0 flex-1 items-center justify-center";

const SideTools = () => (
  <nav className="flex w-9 shrink-0 flex-col bg-[#f0f0f0] text-[17px] leading-none text-[#1e3c96]">
    <div className="flex h-[482px] flex-col">
      {tools.map(([name, icon]) => <button key={name} aria-label={name} className={toolButton}>{icon}</button>)}
    </div>
    <hr className="mx-1 mt-1.5 mb-1 border-[#aaa]" />
    <div className="flex h-[174px] flex-col">
      {tools2.map(([name, icon]) => <button key={name} aria-label={name} className={toolButton}>{icon}</button>)}
    </div>
    <hr className="mx-1 mt-1 mb-2 border-[#aaa]" />
    <div className="flex h-[484px] flex-col">
      <button aria-label="F5" className={toolButton}><Box><text x="12" y="15" {...boxText} fontSize={12}>F5</text></Box></button>
      <button aria-label="同步" className={toolButton}>
        <Box>
          <path d="M5 10c0-6 9-7 12-3l2-2v6h-6l2-2c-2-3-6-2-7 1z" fill="#48b848" />
          <path d="M19 12c0 6-9 7-12 3l-2 2v-6h6l-2 2c2 3 6 2 7-1z" fill="#70cc60" />
        </Box>
      </button>
      {periods.map((p) => (
        <button key={p} className={p === "日" ? `${toolButton} border border-[#aaa] border-r-white border-b-white bg-[#f8f8f8]` : toolButton}>{p}</button>
      ))}
    </div>
  </nav>
);

// ---------- bottom ----------
const Index = ({ name, values, total }: { name: string; values: string[]; total?: string }) => (
  <div className="flex items-center whitespace-nowrap">
    <span className="mr-1.5 text-[24px] font-light text-black">{name}</span>
    <div className="flex items-center gap-[23px] font-bold text-[#008000]">
      {values.map((v) => <span key={v}>{v}</span>)}
      {total && <span className="text-black"><Num v={total} /></span>}
    </div>
  </div>
);

const StatusBar = () => (
  <footer className="flex h-[36px] shrink-0 items-center gap-[22px] border-t-2 border-b-2 border-t-[#d22] border-b-[#1b2a3a] bg-[#f0f0f0] text-[21px] leading-none">
    <svg className="-mr-[20px] h-[22px] w-[23px] shrink-0" viewBox="0 0 23 22">
      <rect x="1" y="1" width="21" height="20" rx="3" fill="#ffb428" stroke="#d88a10" />
      <rect x="5" y="6" width="12" height="10" fill="#ffe08c" stroke="#fff" strokeWidth="2" />
      <rect x="8" y="9" width="6" height="4" fill="#f8a018" />
    </svg>
    <Index name="上证" values={["3276.09", "-7.16", "-0.22%"]} total="3288亿" />
    <Index name="沪深" values={["4019.85", "-14.26", "-0.35%"]} total="2017亿" />
    <Index name="创业" values={["2372.68", "-4.90", "-"]} />
  </footer>
);

const Banner = () => (
  <div className="absolute right-0 bottom-0 flex h-[109px] w-1/2 items-center bg-[#80aad8] pl-[20px]">
    <strong className="text-[75px] leading-none font-black text-[#170087]">公式指标网</strong>
    <svg className="ml-[38px] h-[106px] w-[106px] shrink-0" viewBox="0 0 106 106">
      <g fill="none" strokeWidth="12">
        <path d="M7 51A46 46 0 0 1 40 9" stroke="#dc6048" />
        <path d="M66 9a46 46 0 0 1 33 42" stroke="#dc6048" />
        <path d="M99 55a46 46 0 0 1-53 43" stroke="#ecd04c" />
      </g>
      <g fill="#ecd04c">
        {/* key head, then the coin body in two halves */}
        <path fillRule="evenodd" d="M44 0h19v9l-3 2v9h12v29H33v-7h12v5h7v-6H33v-7h19v-5H33v-7h15v-11l-4-2zm9 4a4 5 0 1 0 0 10 4 5 0 0 0 0-10z" />
        <path d="M32 54h42v6H58v5h16v6H60l14 8v10L63 93l-7-18v-3h-6v3l-7 18-11-4V79l14-8H32v-6h16v-5H32z" />
      </g>
      <path id="ring" d="M4 54A50 50 0 0 0 42 102" fill="none" />
      <text fontSize="11" fontWeight="700" fill="#fff"><textPath href="#ring">www.9m8.cn</textPath></text>
    </svg>
    <a href="#" className="ml-[42px] font-['Liberation_Serif',serif] text-[88px] leading-none font-bold text-white [-webkit-text-stroke:3px_white]">www.9m8.cn</a>
  </div>
);

const InputMethod = () => {
  const key = "flex h-full items-center justify-center border border-white border-r-[#444] border-b-[#444] bg-[#c4c4c4]";
  return (
    <div className="absolute top-[903px] left-[1282px] flex h-[26px] w-[158px] border-2 border-[#f4f0e4] border-r-[#888] border-b-[#888] p-px text-[16px] leading-none text-black">
      <button className={`w-[20px] ${key} font-['Liberation_Serif',serif] text-[18px] font-bold text-[#900000]`}>A</button>
      <button className={`flex-1 ${key}`}>极品五笔</button>
      <button aria-label="半角" className={`w-[20px] ${key}`}>
        <svg className="h-3 w-3" viewBox="0 0 12 12"><path d="M7 0a7 7 0 0 1-7 8 6 6 0 1 0 7-8z" /></svg>
      </button>
      <button className={`w-[20px] ${key}`}>·,</button>
      <button aria-label="键盘" className={`w-[20px] ${key}`}>
        <svg className="h-3 w-4" viewBox="0 0 16 12">
          <rect width="16" height="12" fill="#888" />
          <path d="M1 2h14M1 5h14M1 8h14" stroke="#fff" strokeWidth="1.5" strokeDasharray="2 1" />
          <path d="M4 10.5h8" stroke="#fff" strokeWidth="1.5" />
        </svg>
      </button>
    </div>
  );
};

const App = () => (
  <div className="relative flex h-screen flex-col overflow-hidden bg-black font-['Liberation_Sans','Noto_Sans_CJK_SC',sans-serif]">
    <TitleBar />
    <div className="flex min-h-0 flex-1">
      <main className="flex min-w-0 flex-1 flex-col">
        <PeriodBar />
        <PriceChart />
        <IndicatorChart />
        <TimeAxis />
        <TabRow items={tabs} />
        <TabRow items={links} />
      </main>
      <QuotePanel />
      <SideTools />
    </div>
    <StatusBar />
    <InputMethod />
    <Banner />
  </div>
);

export default App;
